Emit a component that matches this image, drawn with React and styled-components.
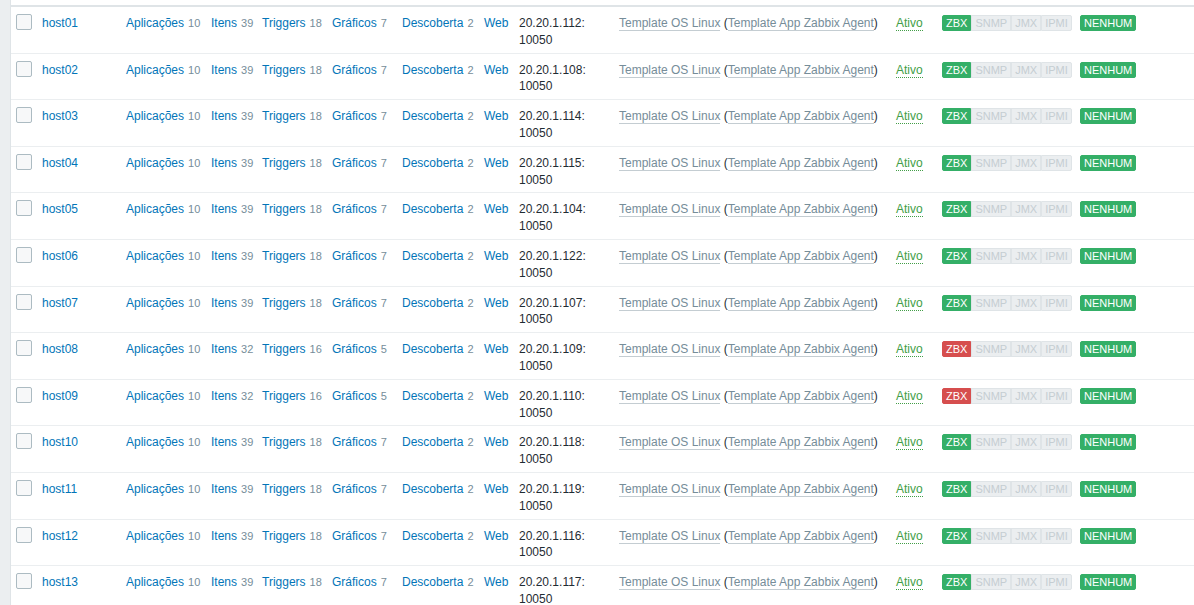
import React from "react"
import styled, { createGlobalStyle } from "styled-components"

//  global
const GlobalStyle = createGlobalStyle`
  html, body {
    margin: 0;
    padding: 0;
    background: #ffffff;
    overflow: hidden;
  }
  body {
    font-family: "Liberation Sans", Arial, sans-serif;
    font-size: 12px;
    color: #1f2c33;
  }
`

//  styled-components
const Page = styled.div`
  display: flex;
  width: 1194px;
  height: 605px;
  overflow: hidden;
`

const Gutter = styled.div`
  width: 10px;
  flex: none;
  background: #ebeef0;
  border-right: 1px solid #dfe4e7;
`

const Main = styled.div`
  flex: 1;
  padding-top: 5px;
  background: #ffffff;
`

const Table = styled.table`
  width: 100%;
  table-layout: fixed;
  border-collapse: collapse;
  border-top: 2px solid #dfe4e7;
  line-height: 1.4;
`

const Row = styled.tr`
  border-bottom: 1px solid #ebeef0;
`

const Cell = styled.td`
  padding: 8px 0 4px 5px;
  vertical-align: top;
  white-space: nowrap;
  overflow: hidden;
`

const Check = styled.span`
  display: block;
  width: 14px;
  height: 14px;
  margin-top: -1px;
  border: 1px solid #acbbc2;
  border-radius: 2px;
  background: #f7f8f9;
`

const Link = styled.a`
  color: #0275b8;
  text-decoration: none;
  cursor: pointer;
`

const Count = styled.span`
  color: #768d99;
  font-size: 11px;
  margin-left: 4px;
`

const Addr = styled.span`
  display: block;
  white-space: normal;
`

const Tpl = styled.a`
  color: #768d99;
  text-decoration: none;
  border-bottom: 1px solid #c4cdd2;
`

const Status = styled.a`
  color: #429e47;
  text-decoration: none;
  border-bottom: 1px dotted #429e47;
`

const Tags = styled.span`
  display: inline-flex;
  margin-top: -1px;
`

const Tag = styled.span`
  display: inline-block;
  height: 14px;
  line-height: 14px;
  padding: 0 3px;
  font-size: 11px;
  text-transform: uppercase;
  border: 1px solid
    ${props => (props.tone === "green" ? "#34af67" : props.tone === "red" ? "#d64e4e" : "#dfe4e7")};
  background: ${props =>
    props.tone === "green" ? "#34af67" : props.tone === "red" ? "#d64e4e" : "#ebeef0"};
  color: ${props => (props.tone ? "#ffffff" : "#c5cdd2")};

  &:first-child {
    border-radius: 2px 0 0 2px;
  }
  &:last-child {
    border-radius: 0 2px 2px 0;
  }
  &:only-child {
    border-radius: 2px;
  }
`

const widths = [26, 84, 85, 51, 70, 70, 82, 35, 100, 277, 46, 138, 119]

const hosts = [
  ["host01", "112", 39, 18, 7, "green"],
  ["host02", "108", 39, 18, 7, "green"],
  ["host03", "114", 39, 18, 7, "green"],
  ["host04", "115", 39, 18, 7, "green"],
  ["host05", "104", 39, 18, 7, "green"],
  ["host06", "122", 39, 18, 7, "green"],
  ["host07", "107", 39, 18, 7, "green"],
  ["host08", "109", 32, 16, 5, "red"],
  ["host09", "110", 32, 16, 5, "red"],
  ["host10", "118", 39, 18, 7, "green"],
  ["host11", "119", 39, 18, 7, "green"],
  ["host12", "116", 39, 18, 7, "green"],
  ["host13", "117", 39, 18, 7, "green"],
]

const HostRow = ({ name, ip, items, triggers, graphs, zbx }) => (
  <Row>
    <Cell>
      <Check />
    </Cell>
    <Cell>
      <Link>{name}</Link>
    </Cell>
    <Cell>
      <Link>Aplicações</Link>
      <Count>10</Count>
    </Cell>
    <Cell>
      <Link>Itens</Link>
      <Count>{items}</Count>
    </Cell>
    <Cell>
      <Link>Triggers</Link>
      <Count>{triggers}</Count>
    </Cell>
    <Cell>
      <Link>Gráficos</Link>
      <Count>{graphs}</Count>
    </Cell>
    <Cell>
      <Link>Descoberta</Link>
      <Count>2</Count>
    </Cell>
    <Cell>
      <Link>Web</Link>
    </Cell>
    <Cell>
      <Addr>
        20.20.1.{ip}:
        <br />
        10050
      </Addr>
    </Cell>
    <Cell>
      <Tpl>Template OS Linux</Tpl> (<Tpl>Template App Zabbix Agent</Tpl>)
    </Cell>
    <Cell>
      <Status>Ativo</Status>
    </Cell>
    <Cell>
      <Tags>
        <Tag tone={zbx}>ZBX</Tag>
        <Tag>SNMP</Tag>
        <Tag>JMX</Tag>
        <Tag>IPMI</Tag>
      </Tags>
    </Cell>
    <Cell>
      <Tags>
        <Tag tone="green">NENHUM</Tag>
      </Tags>
    </Cell>
  </Row>
)

const App = () => {
  return (
    <Page>
      <GlobalStyle />
      <Gutter />
      <Main>
        <Table>
          <colgroup>
            {widths.map((w, i) => (
              <col key={i} style={{ width: w }} />
            ))}
          </colgroup>
          <tbody>
            {hosts.map(([name, ip, items, triggers, graphs, zbx]) => (
              <HostRow
                key={name}
                name={name}
                ip={ip}
                items={items}
                triggers={triggers}
                graphs={graphs}
                zbx={zbx}
              />
            ))}
          </tbody>
        </Table>
      </Main>
    </Page>
  )
}

export default App
